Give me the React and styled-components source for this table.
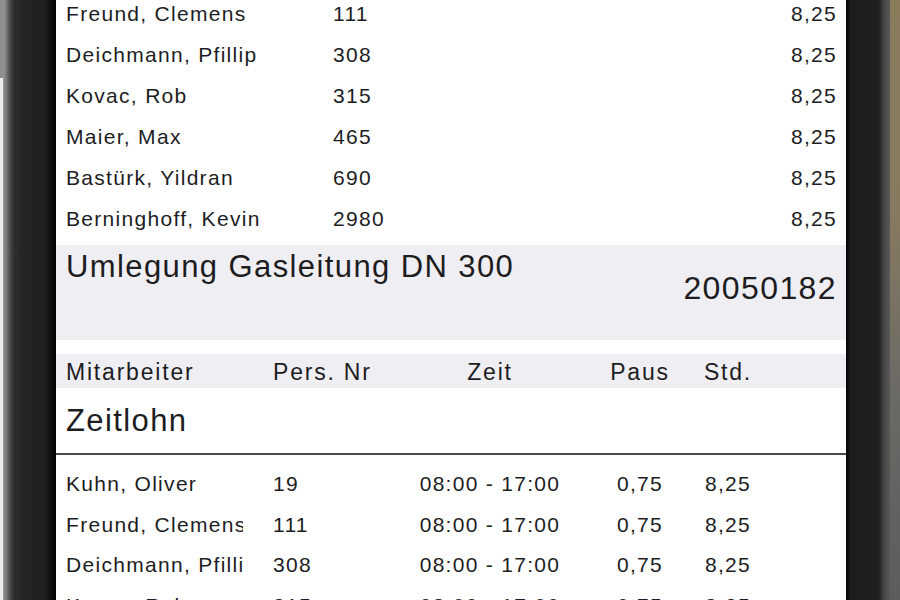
import React from "react";
import styled, { createGlobalStyle } from "styled-components";

const Global = createGlobalStyle`
  html, body { margin: 0; padding: 0; background: #1e1e1e; }
  body { width: 900px; height: 600px; overflow: hidden; }
`;

const Device = styled.div`
  display: flex;
  width: 900px;
  height: 600px;
  overflow: hidden;
`;

const LeftBezel = styled.div`
  width: 56px;
  flex: none;
  display: flex;
  flex-direction: column;
  background: linear-gradient(
    to right,
    #ececec 0,
    #ececec 3px,
    #9a9a9a 3px,
    #707070 7px,
    #4a4a4a 10px,
    #2e2e2e 14px,
    #262626 20px,
    #1f1f1f 44px,
    #121212 50px,
    #050505 55px,
    #000 56px
  );
`;

const SideButton = styled.div`
  width: 3px;
  height: 78px;
  background: #8e8e8e;
`;

const RightBezel = styled.div`
  width: 54px;
  flex: none;
  display: flex;
`;

const BezelBody = styled.div`
  width: 44px;
  background: linear-gradient(
    to right,
    #050505 0,
    #0c0c0c 2px,
    #1c1c1c 4px,
    #1f1f1f 30px,
    #262626 34px,
    #3a3a3a 36px,
    #4e4e4e 40px,
    #585858 44px
  );
`;

const EdgeStrip = styled.div`
  width: 10px;
  background: linear-gradient(to bottom, #8b7c5c 0%, #877a60 35%, #6c6a66 65%, #5c5c5c 100%);
`;

const Screen = styled.div`
  flex: 1;
  background: #fff;
  overflow: hidden;
  font-family: "Liberation Sans", Arial, sans-serif;
  color: #1d1d1f;
`;

const Scroll = styled.div`
  margin-top: -7px;
  display: flex;
  flex-direction: column;
`;

const SummaryRow = styled.div`
  display: grid;
  grid-template-columns: 199px 1fr auto;
  column-gap: 68px;
  height: 41px;
  line-height: 41px;
  padding: 0 9px 0 10px;
  font-size: 21px;
  letter-spacing: 1.3px;
  white-space: nowrap;
`;

const Clip = styled.span`
  overflow: hidden;
  white-space: nowrap;
  max-width: ${(p) => p.$w}px;
`;

const ProjectHeader = styled.div`
  margin-top: 6px;
  height: 95px;
  box-sizing: border-box;
  background: #efeef2;
  display: flex;
  justify-content: space-between;
  align-items: flex-start;
  padding: 4px 9px 0 10px;
  letter-spacing: 1.4px;
`;

const ProjectTitle = styled.div`
  font-size: 31px;
  line-height: 36px;
`;

const ProjectNumber = styled.div`
  font-size: 32px;
  line-height: 36px;
  margin-top: 21px;
`;

const tableColumns = "207px 130px 174px 126px 50px 1fr";

const ColumnHeader = styled.div`
  margin-top: 14px;
  height: 34px;
  box-sizing: border-box;
  padding: 3px 10px 0 10px;
  background: #efeef2;
  display: grid;
  grid-template-columns: ${tableColumns};
  font-size: 23px;
  line-height: 31px;
  letter-spacing: 1.8px;
  white-space: nowrap;
`;

const HeadCell = styled.span`
  text-align: ${(p) => (p.$center ? "center" : "left")};
`;

const GroupTitle = styled.div`
  height: 67px;
  box-sizing: border-box;
  padding: 15px 10px 0 10px;
  font-size: 31px;
  line-height: 36px;
  letter-spacing: 1.4px;
  border-bottom: 2px solid #4a4a4a;
`;

const Rows = styled.div`
  padding-top: 8px;
`;

const EntryRow = styled.div`
  display: grid;
  grid-template-columns: ${tableColumns};
  height: 40.5px;
  line-height: 41px;
  padding: 0 10px;
  font-size: 21px;
  letter-spacing: 1.3px;
  white-space: nowrap;
`;

const Cell = styled.span`
  text-align: ${(p) => (p.$center ? "center" : "left")};
  overflow: visible;
`;

const summary = [
  ["Freund, Clemens", "111", "8,25"],
  ["Deichmann, Pfillip", "308", "8,25"],
  ["Kovac, Rob", "315", "8,25"],
  ["Maier, Max", "465", "8,25"],
  ["Bastürk, Yildran", "690", "8,25"],
  ["Berninghoff, Kevin", "2980", "8,25"],
];

const entries = [
  ["Kuhn, Oliver", "19", "08:00 - 17:00", "0,75", "8,25"],
  ["Freund, Clemens", "111", "08:00 - 17:00", "0,75", "8,25"],
  ["Deichmann, Pfillip", "308", "08:00 - 17:00", "0,75", "8,25"],
  ["Kovac, Rob", "315", "08:00 - 17:00", "0,75", "8,25"],
];

export default function App() {
  return (
    <>
      <Global />
      <Device>
        <LeftBezel>
          <SideButton />
        </LeftBezel>
        <Screen>
          <Scroll>
            {summary.map(([name, nr, std]) => (
              <SummaryRow key={nr}>
                <Clip $w={199}>{name}</Clip>
                <span>{nr}</span>
                <span>{std}</span>
              </SummaryRow>
            ))}
            <ProjectHeader>
              <ProjectTitle>Umlegung Gasleitung DN 300</ProjectTitle>
              <ProjectNumber>20050182</ProjectNumber>
            </ProjectHeader>
            <ColumnHeader>
              <HeadCell>Mitarbeiter</HeadCell>
              <HeadCell>Pers. Nr</HeadCell>
              <HeadCell $center>Zeit</HeadCell>
              <HeadCell $center>Paus</HeadCell>
              <HeadCell $center>Std.</HeadCell>
            </ColumnHeader>
            <GroupTitle>Zeitlohn</GroupTitle>
            <Rows>
              {entries.map(([name, nr, time, pause, std]) => (
                <EntryRow key={nr}>
                  <Clip $w={177}>{name}</Clip>
                  <Cell>{nr}</Cell>
                  <Cell $center>{time}</Cell>
                  <Cell $center>{pause}</Cell>
                  <Cell $center>{std}</Cell>
                </EntryRow>
              ))}
            </Rows>
          </Scroll>
        </Screen>
        <RightBezel>
          <BezelBody />
          <EdgeStrip />
        </RightBezel>
      </Device>
    </>
  );
}
